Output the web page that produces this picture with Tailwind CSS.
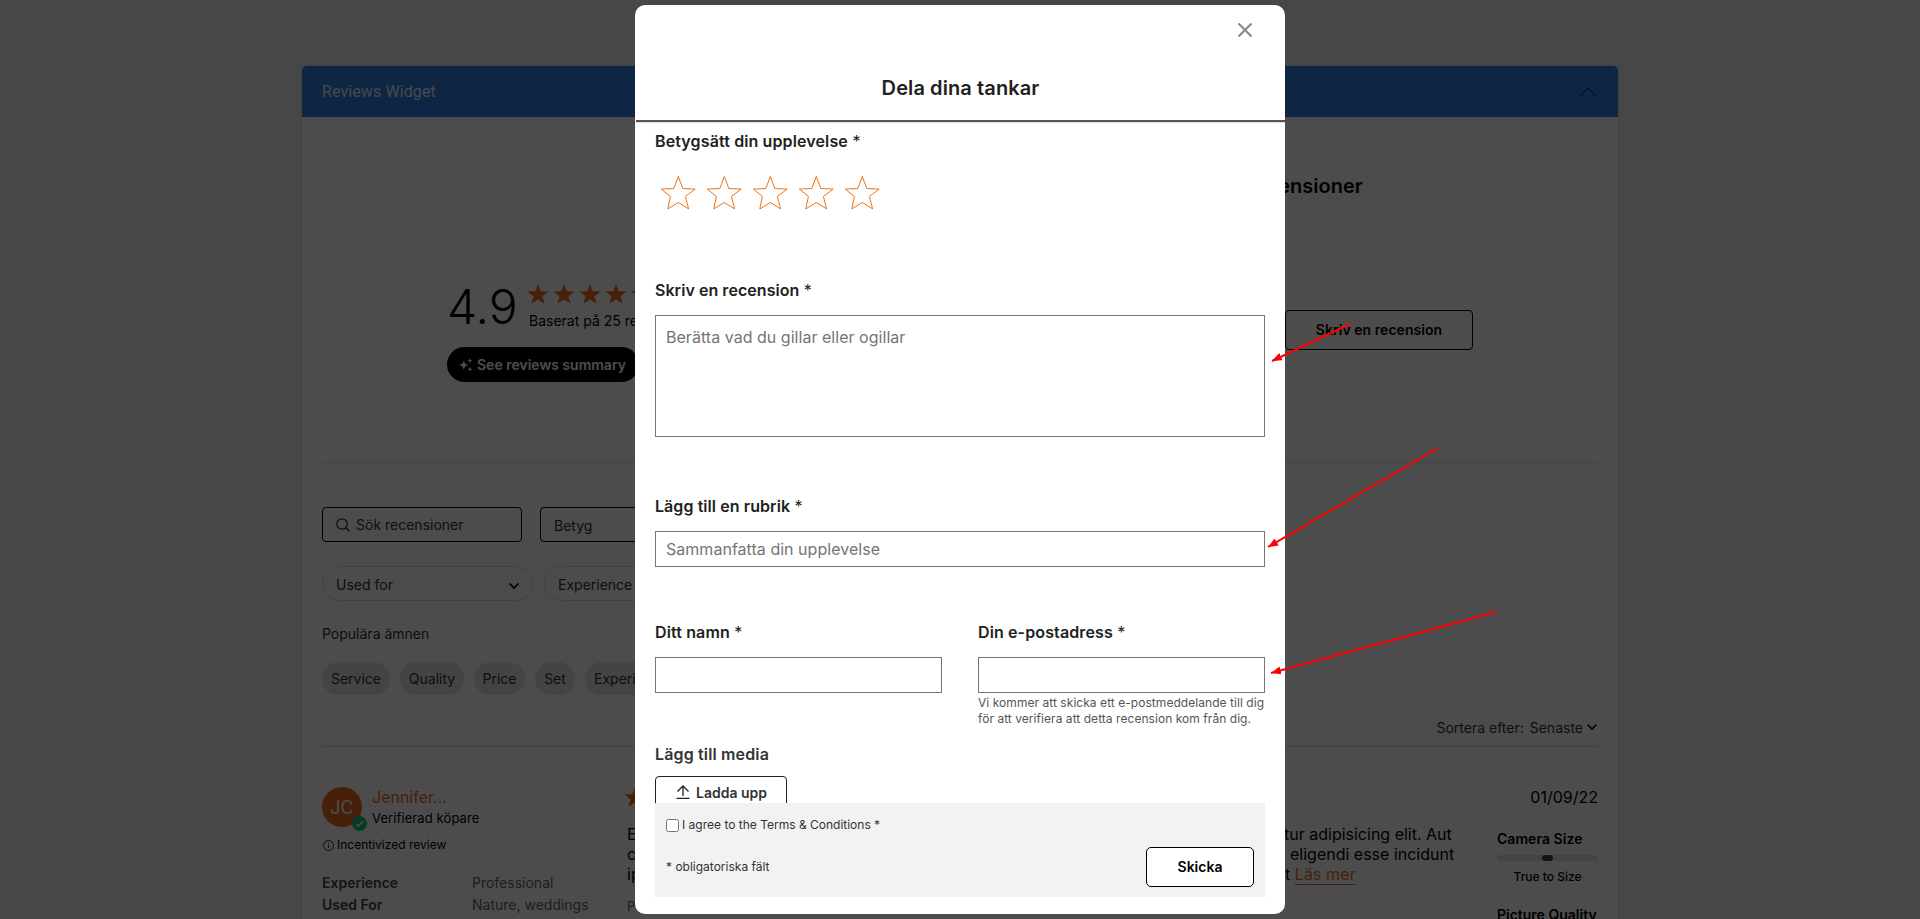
<!DOCTYPE html>
<html lang="sv">
<head>
<meta charset="utf-8">
<title>Reviews Widget</title>
<script src="https://cdn.jsdelivr.net/npm/@tailwindcss/browser@4"></script>
</head>
<body class="relative h-[919px] overflow-hidden bg-[#efefef] font-['Inter','Liberation_Sans',sans-serif] text-sm leading-5 text-black">
<svg class="hidden">
  <symbol id="star" viewBox="0 0 24 24"><path d="M12 1l3 8 8.5.3-6.7 5.2 2.4 8.2L12 18l-7.2 4.700 2.400-8.200L.5 9.300 9 9z"/></symbol>
  <symbol id="outline" viewBox="0 0 36 36"><path d="M18.300 1.500l4.500 12 12.400.6-9.800 7.300 3.200 12.500L18.300 27.500 7.800 33.900l2.600-12.500L1.300 14.100l12.500-.6z" fill="none" stroke="currentColor"/></symbol>
  <symbol id="down" viewBox="0 0 12 8"><path d="M1.500 1.500L6 6l4.500-4.500" fill="none" stroke="currentColor" stroke-width="1.700"/></symbol>
</svg>

<!-- Page -->
<main class="mx-auto mt-[66px] h-[853px] w-[1316px] overflow-hidden rounded-t-[5px] bg-white shadow-[0_0_3px_rgba(0,0,0,0.25)]">
  <header class="flex h-[51px] items-center justify-between bg-[#2f7fe3] px-5">
    <h1 class="font-['Roboto'] text-base font-normal tracking-[0.1px] text-white/90">Reviews Widget</h1>
    <svg class="mr-[1px] h-[10px] w-[18px] text-black/80" viewBox="0 0 18 10"><path d="M1 9l8-8 8 8" fill="none" stroke="currentColor"/></svg>
  </header>

  <section class="mx-5 flex h-[346px] justify-between border-b border-[#e3e3e3] px-[125px]">
    <div class="pt-[162px]">
      <div class="flex h-[56px] items-center gap-[7px]">
        <span class="w-[73px] text-[48px] leading-[56px] font-[350]">4.9</span>
        <div>
          <div class="flex gap-[4px] text-[#ec6d1b]">
            <svg class="size-[22px] fill-current"><use href="#star"/></svg><svg class="size-[22px] fill-current"><use href="#star"/></svg><svg class="size-[22px] fill-current"><use href="#star"/></svg><svg class="size-[22px] fill-current"><use href="#star"/></svg><svg class="size-[22px] fill-current"><use href="#star"/></svg>
          </div>
          <p class="mt-[6px] pl-[2px]">Baserat på 25 recensioner</p>
        </div>
      </div>
      <div class="mt-[12px] flex h-[35px] w-[192px] items-center gap-[4px] rounded-full bg-black pl-3 font-semibold text-white">
        <svg class="size-[14px] fill-current" viewBox="0 0 14 14"><path d="M4.800 2.500l1.300 3.300 3.300 1.300-3.300 1.300-1.300 3.300-1.300-3.300L.2 7.100l3.300-1.300zM10.800 0l.7 1.900 1.900.7-1.900.7-.7 1.900-.7-1.900-1.900-.7 1.900-.7zM11 8.600l.7 1.900 1.900.7-1.900.7-.7 1.900-.7-1.900-1.900-.7 1.900-.7z"/></svg>
        <span>See reviews summary</span>
      </div>
    </div>
    <div class="flex w-[188px] flex-col pt-[55px]">
      <h2 class="-ml-[43px] w-[113px] text-right text-xl leading-7 font-semibold">Recensioner</h2>
      <button class="mt-[110px] h-10 w-[188px] rounded-[4px] border border-black font-semibold tracking-[0.05px]">Skriv en recension</button>
    </div>
  </section>

  <section class="mx-5 h-[284px] border-b border-[#d8d8d8] pt-[44px] text-[#333]">
    <div class="flex gap-[18px]">
      <div class="flex h-[35px] w-[200px] items-center gap-[6px] rounded-[4px] border border-black pl-[13px]">
        <svg class="size-[14px]" viewBox="0 0 14 14" fill="none" stroke="currentColor" stroke-width="1.300"><circle cx="6" cy="6" r="5.200"/><path d="M9.800 9.800l3.700 3.500"/></svg>
        <span>Sök recensioner</span>
      </div>
      <div class="flex h-[35px] w-[200px] items-center rounded-[4px] border border-black pt-[2px] pl-[13px]">Betyg</div>
    </div>
    <div class="mt-6 flex gap-[11px]">
      <div class="flex h-[35px] w-[211px] items-center justify-between rounded-full border border-[#dcdcdc] pt-[2px] pr-3 pl-[13px]">Used for <svg class="mt-[2px] h-[8px] w-[12px] text-black"><use href="#down"/></svg></div>
      <div class="flex h-[35px] w-[211px] items-center rounded-full border border-[#dcdcdc] pt-[2px] pl-[13px]">Experience</div>
    </div>
    <p class="mt-[23px]">Populära ämnen</p>
    <div class="mt-[18px] flex gap-[10px]">
      <span class="flex h-[33px] w-[68px] items-center justify-center rounded-full bg-[#e5e5e5]">Service</span>
      <span class="flex h-[33px] w-[64px] items-center justify-center rounded-full bg-[#e5e5e5]">Quality</span>
      <span class="flex h-[33px] w-[51px] items-center justify-center rounded-full bg-[#e5e5e5]">Price</span>
      <span class="flex h-[33px] w-[40px] items-center justify-center rounded-full bg-[#e5e5e5]">Set</span>
      <span class="flex h-[33px] items-center rounded-full bg-[#e5e5e5] px-[9px]">Experience</span>
    </div>
    <div class="mt-[23px] flex items-center justify-end gap-[3px]"><span>Sortera efter: <span class="ml-[2px]">Senaste</span></span><svg class="-mt-[3px] h-[8px] w-[12px] text-black"><use href="#down"/></svg></div>
  </section>

  <section class="mx-5 flex pt-10">
    <div class="w-[305px]">
      <div class="flex gap-[10px]">
        <div class="relative flex size-10 items-center justify-center rounded-full bg-[#ec6d1b] pt-[2px] text-lg text-white">JC
          <svg class="absolute top-[29px] left-[30px] size-[15px]" viewBox="0 0 15 15"><circle cx="7.500" cy="7.500" r="7.500" fill="#1cc286"/><path d="M4 7.800l2.400 2.300 4.600-4.600" fill="none" stroke="#fff" stroke-width="1.500"/></svg>
        </div>
        <div>
          <p class="h-[21px] text-base leading-[21px] text-[#ec6d1b]">Jennifer...</p>
          <p class="text-[13px] tracking-[0.1px]">Verifierad köpare</p>
        </div>
      </div>
      <p class="mt-[7px] flex items-center gap-[3px] pl-px text-xs leading-5">
        <svg class="size-[11px]" viewBox="0 0 11 11" fill="none" stroke="#333"><circle cx="5.500" cy="5.500" r="5"/><path d="M5.500 5v3M5.500 3v1"/></svg>Incentivized review
      </p>
      <div class="mt-[17px] grid grid-cols-[150px_1fr] leading-[22px] text-[#666]">
        <span class="font-semibold text-[#444]">Experience</span><span>Professional</span>
        <span class="font-semibold text-[#444]">Used For</span><span>Nature, weddings</span>
      </div>
    </div>
    <div class="w-[831px]">
      <svg class="-mt-px -ml-[3px] size-[22px] fill-[#ec6d1b]"><use href="#star"/></svg>
      <div class="mt-[16px] text-base leading-5">
        <p class="flex"><span class="w-[657px]">Et</span><span>tur adipisicing elit. Aut</span></p>
        <p class="flex"><span class="w-[663px]">co</span><span>eligendi esse incidunt</span></p>
        <p class="flex"><span class="w-[658px]">ip</span><span>t <span class="border-b border-[#ec6d1b] tracking-[0.1px] text-[#ec6d1b]">Läs mer</span></span></p>
      </div>
      <p class="mt-[12px] text-[13px] text-[#555]">P</p>
    </div>
    <div class="-ml-[30px] w-[170px]">
      <p class="text-right text-base leading-5">01/09/22</p>
      <div class="mt-[22px] ml-[69px]">
        <p class="font-semibold tracking-[0.05px]">Camera Size</p>
        <div class="mt-[6px] flex h-[6px] justify-center rounded-full bg-[#e5e5e5]"><span class="w-[11px] rounded-full bg-[#444]"></span></div>
        <p class="mt-[6px] text-center text-xs leading-5 font-medium">True to Size</p>
        <p class="mt-[18px] font-semibold whitespace-nowrap">Picture Quality</p>
      </div>
    </div>
  </section>
</main>

<!-- Review dialog -->
<div class="absolute inset-0 flex justify-center bg-black/70 pt-[5px]">
  <div class="flex h-[909px] w-[650px] flex-col rounded-[10px] bg-white text-[#212121]">
    <div class="ml-px h-[117px] border-b-2 border-[#555] shadow-[0_1px_0_#ddd]">
      <div class="flex h-[50px] items-center justify-end pr-[33px]"><svg class="size-[14px]" viewBox="0 0 14 14"><path d="M.5.5l13 13M13.500.5l-13 13" stroke="#8a8a8a" stroke-width="2.200"/></svg></div>
      <h2 class="mt-[19px] text-center text-xl leading-7 font-semibold tracking-[0.1px]">Dela dina tankar</h2>
    </div>
    <div class="mx-5 h-[681px] overflow-hidden">
      <p class="mt-[9px] text-base leading-5"><b class="font-semibold tracking-[0.12px]">Betygsätt din upplevelse</b> *</p>
      <div class="mt-[24px] ml-[5px] flex gap-[10px] text-[#e8751a]">
        <svg class="size-9"><use href="#outline"/></svg><svg class="size-9"><use href="#outline"/></svg><svg class="size-9"><use href="#outline"/></svg><svg class="size-9"><use href="#outline"/></svg><svg class="size-9"><use href="#outline"/></svg>
      </div>
      <p class="mt-[69px] text-base leading-5"><b class="font-semibold tracking-[0.05px]">Skriv en recension</b> *</p>
      <textarea class="mt-[15px] block h-[122px] w-full resize-none border border-[#767676] px-[10px] py-[11px] text-base leading-5 tracking-[0.03px] placeholder:text-[#757575]" placeholder="Berätta vad du gillar eller ogillar"></textarea>
      <p class="mt-[59px] text-base leading-5"><b class="font-semibold tracking-[0.07px]">Lägg till en rubrik</b> *</p>
      <input class="mt-[15px] block h-9 w-full border border-[#767676] px-[10px] text-base tracking-[0.03px] placeholder:text-[#757575]" placeholder="Sammanfatta din upplevelse">
      <div class="mt-[55px] flex justify-between">
        <div class="w-[287px]">
          <p class="text-base leading-5"><b class="font-semibold tracking-[0.12px]">Ditt namn</b> *</p>
          <input class="mt-[15px] block h-9 w-full border border-[#767676] px-[10px]">
        </div>
        <div class="w-[287px]">
          <p class="text-base leading-5"><b class="font-semibold tracking-[0.12px]">Din e-postadress</b> *</p>
          <input class="mt-[15px] block h-9 w-full border border-[#767676] px-[10px]">
          <p class="mt-[2px] text-xs leading-4 tracking-[0.05px] whitespace-nowrap text-[#555]">Vi kommer att skicka ett e-postmeddelande till dig<br>för att verifiera att detta recension kom från dig.</p>
        </div>
      </div>
      <p class="mt-[17px] text-base leading-5 font-semibold tracking-[0.15px] text-[#333]">Lägg till media</p>
      <div class="mt-[12px] flex h-10 w-[132px] items-start gap-[6px] rounded-[4px] border border-[#222] pt-[6px] pl-5 font-semibold text-[#333]">
        <svg class="mt-[2px] size-[14px]" viewBox="0 0 14 14" fill="none" stroke="#222" stroke-width="1.300"><path d="M7 11V1M1.500 6.500L7 1l5.500 5.500M.5 13.400h13"/></svg>Ladda upp
      </div>
    </div>
    <div class="mx-5 flex h-[94px] flex-col bg-[#f2f2f2] px-[11px] pt-[12px] text-xs text-[#333]">
      <label class="flex h-5 items-center gap-[3px]"><span class="size-[13px] rounded-[2.500px] border border-[#767676] bg-white"></span>I agree to the Terms &amp; Conditions *</label>
      <div class="mt-[12px] flex items-center justify-between"><span>* obligatoriska fält</span><button class="h-10 w-[108px] rounded-[5px] border border-black bg-white text-sm font-semibold text-black">Skicka</button></div>
    </div>
  </div>
</div>

<!-- Annotation arrows -->
<svg class="absolute inset-0 h-[919px] w-[1920px]" viewBox="0 0 1920 919" fill="none" stroke="#f00" stroke-width="2">
  <defs><marker id="head" markerUnits="userSpaceOnUse" markerWidth="10" markerHeight="8" refX="10" refY="4" orient="auto"><path d="M0 0l10 4-10 4z" fill="#f00" stroke="none"/></marker></defs>
  <path d="M1351 323.500L1272 361" marker-end="url(#head)"/>
  <path d="M1438 448L1268 547" marker-end="url(#head)"/>
  <path d="M1496 612L1271 673" marker-end="url(#head)"/>
</svg>
</body>
</html>
